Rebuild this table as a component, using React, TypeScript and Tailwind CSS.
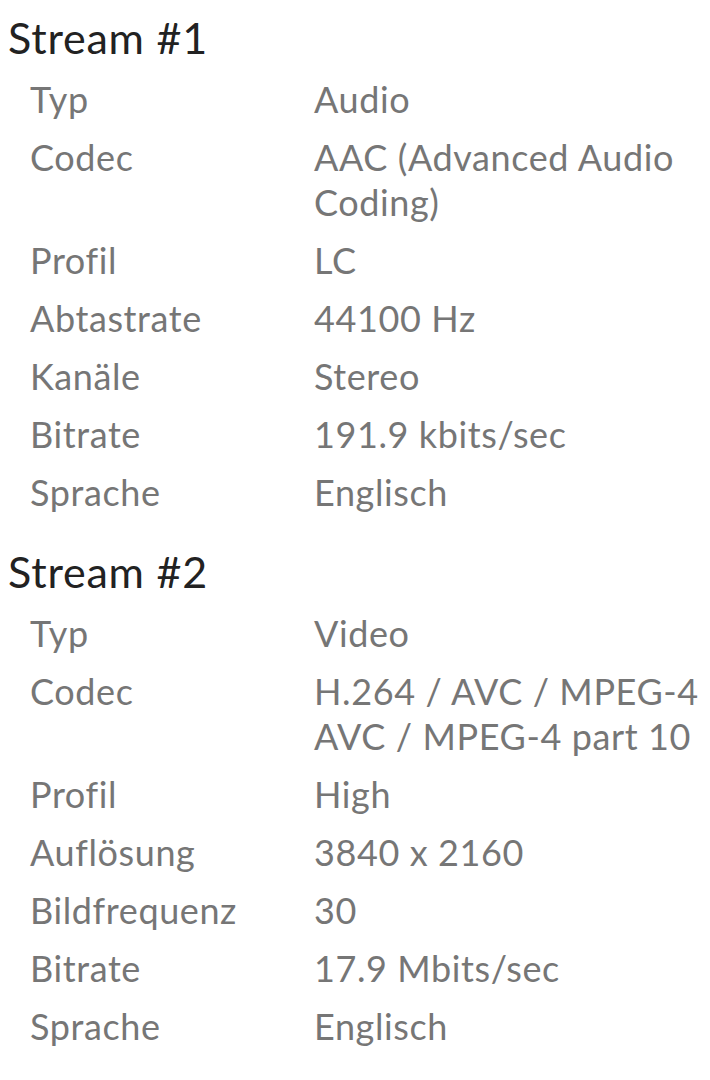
const streams: { title: string; rows: [string, string[]][] }[] = [
  {
    title: "Stream #1",
    rows: [
      ["Typ", ["Audio"]],
      ["Codec", ["AAC (Advanced Audio", "Coding)"]],
      ["Profil", ["LC"]],
      ["Abtastrate", ["44100 Hz"]],
      ["Kanäle", ["Stereo"]],
      ["Bitrate", ["191.9 kbits/sec"]],
      ["Sprache", ["Englisch"]],
    ],
  },
  {
    title: "Stream #2",
    rows: [
      ["Typ", ["Video"]],
      ["Codec", ["H.264 / AVC / MPEG-4", "AVC / MPEG-4 part 10"]],
      ["Profil", ["High"]],
      ["Auflösung", ["3840 x 2160"]],
      ["Bildfrequenz", ["30"]],
      ["Bitrate", ["17.9 Mbits/sec"]],
      ["Sprache", ["Englisch"]],
    ],
  },
];

export default function App() {
  return (
    <div className="w-[710px] h-[1080px] bg-white overflow-hidden pl-2 pt-[12px] font-['Lato','Noto_Sans',sans-serif]">
      {streams.map((s) => (
        <section key={s.title} className="mb-[31px]">
          <h2 className="text-[43px] leading-[52px] tracking-[0.8px] text-[#222222]">{s.title}</h2>
          <dl className="mt-[13px] flex flex-col gap-[13px] pl-[22px]">
            {s.rows.map(([k, v]) => (
              <div key={k} className="grid grid-cols-[284px_1fr] text-[36px] leading-[45px] tracking-[0.6px] text-[#767676]">
                <dt>{k}</dt>
                <dd>
                  {v.map((line) => (
                    <span key={line} className="block whitespace-nowrap">{line}</span>
                  ))}
                </dd>
              </div>
            ))}
          </dl>
        </section>
      ))}
    </div>
  );
}
